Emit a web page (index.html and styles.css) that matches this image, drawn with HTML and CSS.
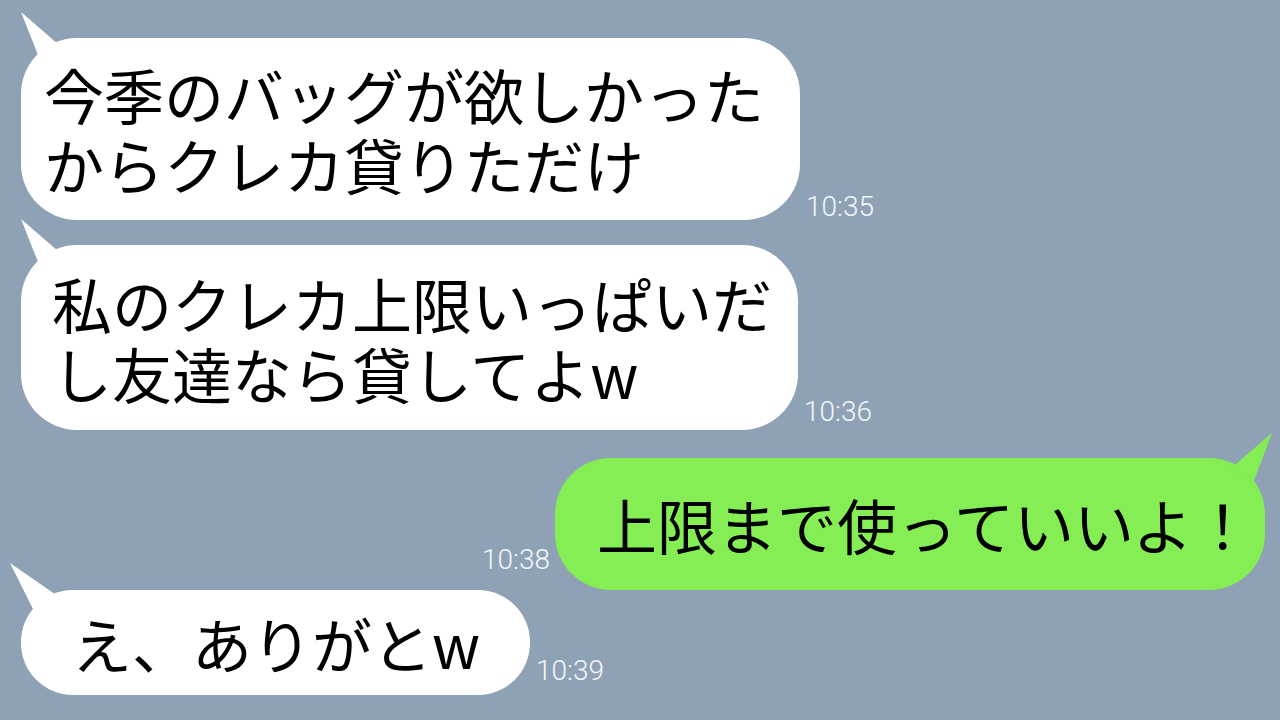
FILE: index.html
```html
<!DOCTYPE html>
<html lang="ja">
<head>
<meta charset="utf-8">
<title>chat</title>
<link rel="stylesheet" href="styles.css">
</head>
<body>
<main class="chat">
  <div class="row them row-1">
    <div class="bubble white b1"><p class="msg"><span class="line">今季のバッグが欲しかった</span><span class="line">からクレカ貸りただけ</span></p></div>
    <span class="time t1">10:35</span>
  </div>
  <div class="row them row-2">
    <div class="bubble white b2"><p class="msg"><span class="line">私のクレカ上限いっぱいだ</span><span class="line">し友達なら貸してよw</span></p></div>
    <span class="time t2">10:36</span>
  </div>
  <div class="row me row-3">
    <span class="time t3">10:38</span>
    <div class="bubble green b3"><p class="msg"><span class="line">上限まで使っていいよ！</span></p></div>
  </div>
  <div class="row them row-4">
    <div class="bubble white b4"><p class="msg"><span class="line">え、ありがとw</span></p></div>
    <span class="time t4">10:39</span>
  </div>
</main>
</body>
</html>
```

FILE: styles.css
```css
html, body {
  margin: 0;
  padding: 0;
  background: #8fa2b5;
  width: 1280px;
  height: 720px;
  overflow: hidden;
}

.chat {
  display: flex;
  flex-direction: column;
  padding: 38px 15px 0 21px;
  font-family: "Noto Sans CJK JP", "Noto Sans", sans-serif;
}

.row {
  display: flex;
  align-items: flex-end;
  gap: 6px;
}

.row.me {
  justify-content: flex-end;
  gap: 5px;
}

.row-2 { margin-top: 25px; }
.row-3 { margin-top: 28px; }
.row-4 { margin-top: 0; }

.bubble {
  position: relative;
  display: flex;
  align-items: center;
  box-sizing: border-box;
  border-radius: 56px;
}

.bubble::before {
  content: "";
  position: absolute;
  width: 70px;
  height: 70px;
  background: inherit;
}

.white { background: #ffffff; }
.green { background: #85ee55; }

.them .bubble::before {
  left: -10px;
  top: -30px;
  clip-path: polygon(10px 4px, 55px 43px, 31px 57px);
}

.me .bubble::before {
  right: -15px;
  top: -30px;
  clip-path: polygon(62px 5px, 20px 41px, 43px 55px);
}

.them .b4::before {
  left: -20px;
  top: -30px;
  clip-path: polygon(9px 3px, 61px 39px, 37px 59px);
}

.msg {
  margin: 0;
  display: flex;
  flex-direction: column;
  font-size: 60px;
  color: #000;
  white-space: nowrap;
}

.line {
  display: block;
  height: 70px;
  line-height: 70px;
}

.b1 { width: 779px; height: 182px; padding-left: 23px; }
.b2 { width: 777px; height: 185px; padding-left: 31px; }
.b3 { width: 710px; height: 132px; padding-left: 42px; }
.b4 { width: 509px; height: 105px; padding-left: 51px; border-radius: 52px; }

.time {
  font-family: Roboto, "Noto Sans", sans-serif;
  font-weight: 300;
  font-size: 28px;
  line-height: 1;
  color: #f2f7fa;
  white-space: nowrap;
}

.t1 { margin-bottom: -1px; }
.t2 { margin-bottom: 4px; }
.t3 { margin-bottom: 16px; }
.t4 { margin-bottom: 10px; }
```
